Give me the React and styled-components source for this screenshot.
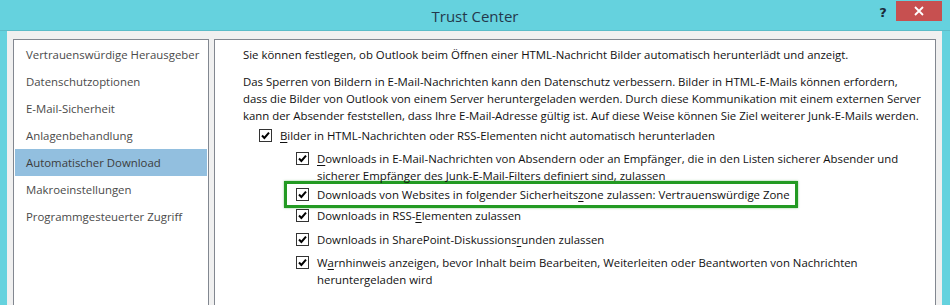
import React from 'react';
import styled, { createGlobalStyle } from 'styled-components';

const Global = createGlobalStyle`
  html, body {
    margin: 0;
    padding: 0;
    background: #65d2de;
  }
`;

const Window = styled.div`
  width: 950px;
  height: 305px;
  background: #65d2de;
  display: flex;
  flex-direction: column;
  overflow: hidden;
  font-family: "Open Sans", "Noto Sans", sans-serif;
`;

const TitleBar = styled.div`
  height: 31px;
  flex: none;
  display: grid;
  grid-template-columns: 1fr auto 1fr;
  align-items: start;
  box-shadow: inset 0 -1px 0 #5bbcc8;
`;

const Title = styled.div`
  grid-column: 2;
  padding-top: 6px;
  font-size: 15px;
  color: #24384c;
`;

const Controls = styled.div`
  grid-column: 3;
  justify-self: end;
  display: flex;
  align-items: flex-start;
  margin-right: 8px;
  padding-top: 1px;
`;

const Help = styled.div`
  width: 26px;
  height: 22px;
  display: flex;
  align-items: center;
  justify-content: center;
  font-family: "DejaVu Sans", sans-serif;
  font-weight: bold;
  font-size: 13px;
  color: #1b2a3a;
`;

const CloseButton = styled.div`
  width: 46px;
  height: 20px;
  background: #c75050;
  display: flex;
  align-items: center;
  justify-content: center;
`;

const Body = styled.div`
  flex: 1;
  background: #f0f0f0;
  margin: 0 8px 0 7px;
  padding: 8px 6px 0 6px;
  display: flex;
  gap: 5px;
`;

const Sidebar = styled.div`
  width: 194px;
  flex: none;
  background: #fff;
  border: 1px solid #828790;
  border-bottom: none;
  padding-top: 1px;
`;

const NavItem = styled.div`
  height: 27px;
  margin: 0 1px;
  padding-left: 11px;
  display: flex;
  align-items: center;
  font-size: 11.4px;
  color: ${p => (p.$active ? '#3c3c3c' : '#4a4a4a')};
  background: ${p => (p.$active ? '#92bfdf' : 'transparent')};
  white-space: nowrap;
`;

const Content = styled.div`
  flex: 1;
  background: #fff;
  border: 1px solid #828790;
  border-bottom: none;
  padding: 6px 0 0 28px;
  font-size: 11.4px;
  line-height: 17px;
  color: #111;
  white-space: nowrap;
`;

const Para = styled.p`
  margin: 0 0 ${p => p.$after}px;
`;

const Option = styled.div`
  display: flex;
  align-items: flex-start;
  gap: 8px;
  margin-left: ${p => (p.$level === 2 ? 53 : 16)}px;
  margin-top: ${p => p.$top}px;
  ${p => p.$marked && `
    width: fit-content;
    margin-left: 41px;
    padding: 2px 5px 2px 9px;
    border: 3px solid #239a23;
    box-shadow: 0 0 2px rgba(60, 160, 60, 0.6);
  `}
`;

const Box = styled.span`
  width: 11px;
  height: 11px;
  flex: none;
  margin-top: 2px;
  border: 1px solid #333;
  background: #fff;
  display: flex;
  align-items: center;
  justify-content: center;
`;

const Key = styled.span`
  text-decoration: underline;
  text-underline-offset: 2px;
`;

const Check = () => (
  <Box>
    <svg width="9" height="9" viewBox="0 0 9 9">
      <path d="M1 4.5 L3.4 7 L8 1.6" fill="none" stroke="#000" strokeWidth="2" />
    </svg>
  </Box>
);

const navItems = [
  'Vertrauenswürdige Herausgeber',
  'Datenschutzoptionen',
  'E-Mail-Sicherheit',
  'Anlagenbehandlung',
  'Automatischer Download',
  'Makroeinstellungen',
  'Programmgesteuerter Zugriff',
];

export default function App() {
  return (
    <Window>
      <Global />
      <TitleBar>
        <Title>Trust Center</Title>
        <Controls>
          <Help>?</Help>
          <CloseButton>
            <svg width="10" height="10" viewBox="0 0 10 10">
              <path d="M1 1 L9 9 M9 1 L1 9" stroke="#fff" strokeWidth="1.8" />
            </svg>
          </CloseButton>
        </Controls>
      </TitleBar>
      <Body>
        <Sidebar>
          {navItems.map(item => (
            <NavItem key={item} $active={item === 'Automatischer Download'}>
              {item}
            </NavItem>
          ))}
        </Sidebar>
        <Content>
          <Para $after={10}>
            Sie können festlegen, ob Outlook beim Öffnen einer HTML-Nachricht Bilder automatisch herunterlädt und anzeigt.
          </Para>
          <Para $after={3}>
            Das Sperren von Bildern in E-Mail-Nachrichten kann den Datenschutz verbessern. Bilder in HTML-E-Mails können erfordern,<br />
            dass die Bilder von Outlook von einem Server heruntergeladen werden. Durch diese Kommunikation mit einem externen Server<br />
            kann der Absender feststellen, dass Ihre E-Mail-Adresse gültig ist. Auf diese Weise können Sie Ziel weiterer Junk-E-Mails werden.
          </Para>
          <Option $top={0}>
            <Check />
            <span><Key>B</Key>ilder in HTML-Nachrichten oder RSS-Elementen nicht automatisch herunterladen</span>
          </Option>
          <Option $level={2} $top={6}>
            <Check />
            <span>
              <Key>D</Key>ownloads in E-Mail-Nachrichten von Absendern oder an Empfänger, die in den Listen sicherer Absender und<br />
              sicherer Empfänger des Junk-E-Mail-Filters definiert sind, zulassen
            </span>
          </Option>
          <Option $level={2} $top={-3} $marked>
            <Check />
            <span>Downloads von Websites in folgender Sicherheits<Key>z</Key>one zulassen: Vertrauenswürdige Zone</span>
          </Option>
          <Option $level={2} $top={-1}>
            <Check />
            <span>Downloads in RSS-<Key>E</Key>lementen zulassen</span>
          </Option>
          <Option $level={2} $top={7}>
            <Check />
            <span>Downloads in SharePoint-Diskussions<Key>r</Key>unden zulassen</span>
          </Option>
          <Option $level={2} $top={6}>
            <Check />
            <span>
              W<Key>a</Key>rnhinweis anzeigen, bevor Inhalt beim Bearbeiten, Weiterleiten oder Beantworten von Nachrichten<br />
              heruntergeladen wird
            </span>
          </Option>
        </Content>
      </Body>
    </Window>
  );
}
